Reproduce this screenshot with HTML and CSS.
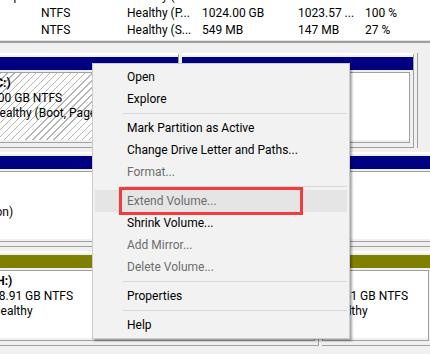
FILE: index.html
```html
<!DOCTYPE html>
<html>
<head>
<meta charset="utf-8">
<link rel="stylesheet" href="styles.css">
</head>
<body>
<div class="list">
  <div class="row cut"><span>imple</span><span>NTFS</span><span>Healthy (B...</span><span>931.51 GB</span><span>904.20 GB</span><span>97 %</span></div>
  <div class="row"><span></span><span>NTFS</span><span>Healthy (P...</span><span>1024.00 GB</span><span>1023.57 ...</span><span>100 %</span></div>
  <div class="row"><span></span><span>NTFS</span><span>Healthy (S...</span><span>549 MB</span><span>147 MB</span><span>27 %</span></div>
</div>
<div class="splitter"></div>
<div class="disks">
  <div class="disk d0">
    <div class="part pc">
      <div class="bar"></div>
      <div class="inner"><div class="body hatched"><div class="name">(C:)</div><div>100 GB NTFS</div><div>Healthy (Boot, Page File, Crash Dump, Primary Partition)</div></div></div>
    </div>
    <div class="part grow">
      <div class="bar"></div>
      <div class="inner"><div class="body"><div class="name">(D:)</div><div>376.81 GB NTFS</div><div>Healthy (Primary Partition)</div></div></div>
    </div>
  </div>
  <div class="disk d1">
    <div class="part p11">
      <div class="bar"></div>
      <div class="inner"><div class="body"><div class="name">&nbsp;</div><div>529 MB NTFS</div><div>Healthy (Recovery Partition)</div></div></div>
    </div>
    <div class="part p12">
      <div class="bar"></div>
      <div class="inner"><div class="body"></div></div>
    </div>
  </div>
  <div class="disk d2">
    <div class="part p21">
      <div class="bar olive"></div>
      <div class="inner"><div class="body"><div class="name">(H:)</div><div>48.91 GB NTFS</div><div>Healthy</div></div></div>
    </div>
    <div class="part p22">
      <div class="bar olive"></div>
      <div class="inner"><div class="body"><div class="name">(I:)</div><div>97.51 GB NTFS</div><div>Healthy</div></div></div>
    </div>
    <div class="part p23">
      <div class="bar olive"></div>
      <div class="inner"><div class="body"></div></div>
    </div>
  </div>
</div>
<div class="menu">
  <div class="item">Open</div>
  <div class="item">Explore</div>
  <div class="sep"></div>
  <div class="item">Mark Partition as Active</div>
  <div class="item">Change Drive Letter and Paths...</div>
  <div class="item off">Format...</div>
  <div class="sep"></div>
  <div class="item off hover">Extend Volume...</div>
  <div class="item">Shrink Volume...</div>
  <div class="item off">Add Mirror...</div>
  <div class="item off">Delete Volume...</div>
  <div class="sep"></div>
  <div class="item">Properties</div>
  <div class="sep"></div>
  <div class="item">Help</div>
  <div class="mark"></div>
</div>
</body>
</html>
```
FILE: styles.css
```css
body {
  margin: 0;
  width: 430px;
  height: 354px;
  overflow: hidden;
  position: relative;
  background: #f0f0f0;
  font-family: Roboto, "Noto Sans", "Liberation Sans", sans-serif;
  font-size: 12px;
  color: #000;
}
.list {
  background: #fff;
  height: 40px;
  overflow: hidden;
  border-bottom: 1px solid #e3e3e3;
}
.row {
  display: grid;
  grid-template-columns: 41px 86px 75px 96px 67px 1fr;
  height: 17px;
  line-height: 17px;
  white-space: nowrap;
}
.row.cut { margin-top: -12px; }
.splitter { height: 2px; background: #a0a0a0; }
.disks { padding-top: 10px; }
.disk {
  display: flex;
  gap: 3px;
  height: 95px;
  margin-bottom: 4px;
  box-sizing: border-box;
}
.part {
  flex-shrink: 0;
  display: flex;
  flex-direction: column;
  box-sizing: border-box;
  border-top: 2px solid #fff;
  border-right: 1px solid #a0a0a0;
  border-bottom: 1px solid #a0a0a0;
  padding-top: 2px;
  padding-bottom: 4px;
}
.bar { height: 13px; background: #000080; }
.bar.olive { background: #808000; }
.inner {
  margin-top: 2px;
  margin-right: 3px;
  border: 1px solid #a0a0a0;
  padding-bottom: 2px;
  background: #f0f0f0;
}
.body {
  height: 67px;
  box-sizing: border-box;
  background: #fff;
  padding: 3px 0 0 4px;
  line-height: 15px;
  white-space: nowrap;
  overflow: hidden;
}
.body.hatched {
  background: repeating-linear-gradient(135deg, #fff 0 4px, #b4b4b4 4px 5px);
}
.name { font-weight: bold; }
.d0 {
  margin-left: -14px;
  width: 432px;
  padding-right: 3px;
  border-right: 1px solid #a0a0a0;
}
.pc { width: 193px; }
.grow { flex: 1; }
.d1 { margin-left: -141px; }
.p11 { width: 341px; }
.p12 { width: 400px; }
.d2 { margin-left: -13px; }
.p21 { width: 332px; }
.p22 { width: 111px; }
.p23 { width: 100px; }
.menu {
  position: absolute;
  left: 92px;
  top: 63px;
  width: 258px;
  box-sizing: border-box;
  background: #f2f2f2;
  border: 1px solid #cccccc;
  padding: 2px;
  box-shadow: 2px 2px 2px rgba(0, 0, 0, 0.35);
}
.item {
  height: 22px;
  line-height: 22px;
  padding-left: 32px;
  white-space: nowrap;
}
.item.off { color: #6d6d6d; }
.item.hover { background: #e5e5e5; }
.sep {
  height: 7px;
  margin-left: 28px;
  background: linear-gradient(#d7d7d7, #d7d7d7) 0 3px / 100% 1px no-repeat;
}
.mark {
  position: absolute;
  left: 26px;
  top: 123px;
  width: 184px;
  height: 28px;
  box-sizing: border-box;
  border: 3px solid #f23c3c;
}
```
